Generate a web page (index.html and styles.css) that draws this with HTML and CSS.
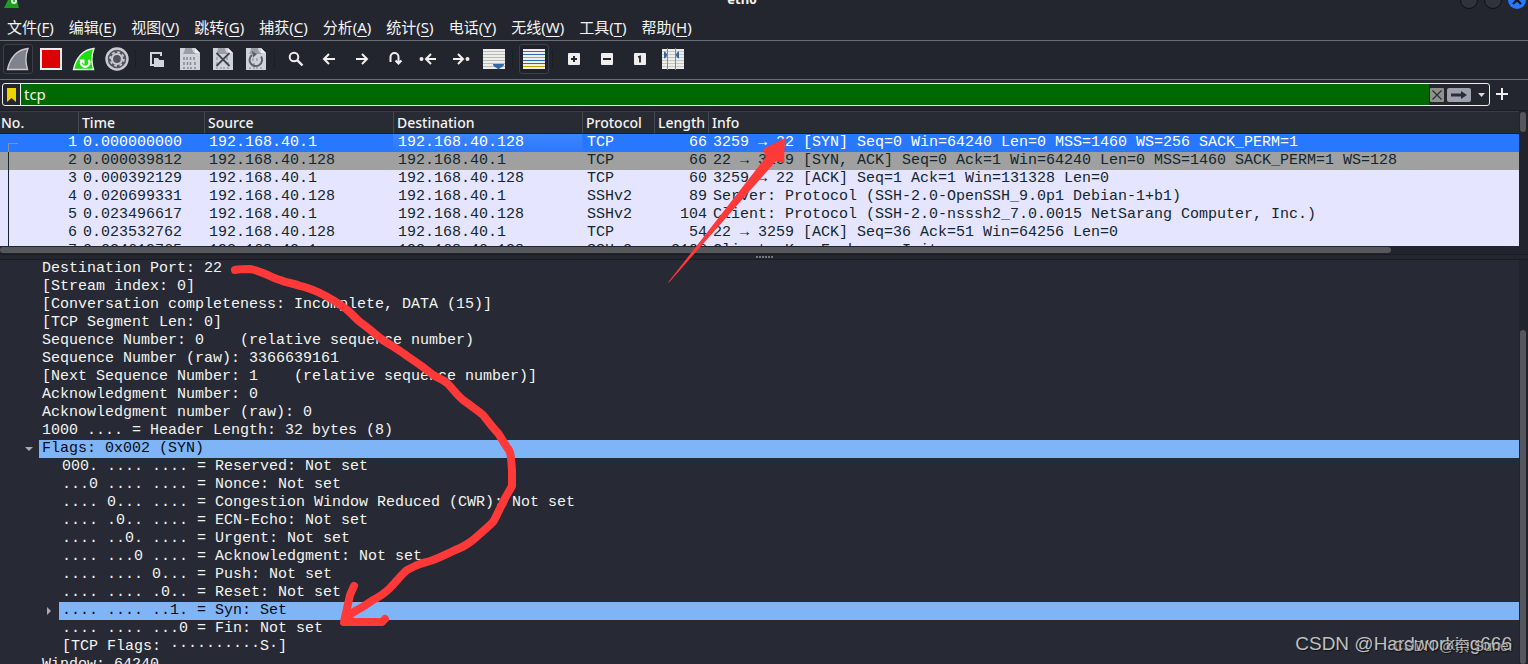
FILE: index.html
```html
<!DOCTYPE html>
<html lang="zh-CN">
<head>
<meta charset="utf-8">
<title>eth0</title>
<link rel="stylesheet" href="styles.css">
</head>
<body>
<div class="window">
  <header class="titlebar">
    <svg class="app-icon" width="16" height="10" viewBox="0 0 16 10"><path d="M0 8L4 0H13L15 8Z" fill="#1f9d1f"/><circle cx="10" cy="1" r="3" fill="#d9f2d9"/><circle cx="10" cy="1" r="1" fill="#1f9d1f"/></svg>
    <span class="title">eth0</span>
    <div class="window-buttons">
      <button class="win-btn" aria-label="最小化"></button>
      <button class="win-btn" aria-label="最大化"></button>
      <button class="win-btn win-close" aria-label="关闭"><svg width="18" height="18" viewBox="0 0 18 18"><path d="M5 5L13 13M13 5L5 13" stroke="#15171d" stroke-width="2.4"/></svg></button>
    </div>
  </header>

  <nav class="menubar">
    <button>文件(<u>F</u>)</button>
    <button>编辑(<u>E</u>)</button>
    <button>视图(<u>V</u>)</button>
    <button>跳转(<u>G</u>)</button>
    <button>捕获(<u>C</u>)</button>
    <button>分析(<u>A</u>)</button>
    <button>统计(<u>S</u>)</button>
    <button>电话(<u>Y</u>)</button>
    <button>无线(<u>W</u>)</button>
    <button>工具(<u>T</u>)</button>
    <button>帮助(<u>H</u>)</button>
  </nav>

  <div class="toolbar">
    <button class="tool framed" aria-label="开始捕获"><svg width="24" height="24" viewBox="0 0 24 24"><path d="M1.5 22.5C4 11 11 2.500 22 1.500C19.500 8 19.500 16 21.500 22.500Z" fill="#80838b" stroke="#c9cbd0" stroke-width="1.400"/></svg></button>
    <button class="tool" aria-label="停止捕获"><svg width="24" height="24" viewBox="0 0 24 24"><rect x="2" y="2" width="20" height="20" fill="#dc0000" stroke="#eeeeec" stroke-width="2"/></svg></button>
    <button class="tool" aria-label="重新开始"><svg width="24" height="24" viewBox="0 0 24 24"><path d="M1.500 22.500C4 11 11 2.500 22 1.500C19.500 8 19.500 16 21.500 22.500Z" fill="#1fdc10" stroke="#e4f5e2" stroke-width="1.400"/><path d="M9.500 13.500A4.200 4.200 0 1 0 16.500 13" fill="none" stroke="#fff" stroke-width="2.200"/><path d="M7 12.500H12.500V17.500Z" fill="#fff"/></svg></button>
    <button class="tool" aria-label="捕获选项"><svg width="24" height="24" viewBox="0 0 24 24"><circle cx="12" cy="12" r="10.500" fill="#53565e" stroke="#c9cbd1" stroke-width="2.400"/><circle cx="12" cy="12" r="6.800" fill="none" stroke="#c9cbd1" stroke-width="1.800" stroke-dasharray="2.700 2.640"/><circle cx="12" cy="12" r="5" fill="#50535b" stroke="#c9cbd1" stroke-width="2.200"/></svg></button>
    <span class="sep"></span>
    <button class="tool" aria-label="打开"><svg width="24" height="24" viewBox="0 0 24 24"><path d="M9 18H6V6H16V9" fill="none" stroke="#d3d5dc" stroke-width="2"/><path d="M9 11H13L14.500 13H19V20H9Z" fill="#d3d5dc"/></svg></button>
    <button class="tool" aria-label="保存"><svg width="24" height="24" viewBox="0 0 24 24"><path d="M2 1H17L22 6V23H2Z" fill="#cfd2d8"/><path d="M7 1C7 3 6 5 5 7H19C15 6 14 3 14 1Z" fill="#9a9da5"/><path d="M17 1V6H22Z" fill="#eceef1"/><path d="M6 10V13M9 10V13M12.500 10V13M16 10V13M6 15V18M9.500 15V18M12.500 15V18M17 15V18M6 20V22M10 20V22M13 20V22M17 20V22" stroke="#858891" stroke-width="1.500"/></svg></button>
    <button class="tool" aria-label="关闭文件"><svg width="24" height="24" viewBox="0 0 24 24"><path d="M2 1H17L22 6V23H2Z" fill="#cfd2d8"/><path d="M7 1C7 3 6 5 5 7H19C15 6 14 3 14 1Z" fill="#9a9da5"/><path d="M17 1V6H22Z" fill="#eceef1"/><path d="M6 10V13M16 10V13M6 15V18M17 15V18M6 20V22M10 20V22M13 20V22M17 20V22" stroke="#9a9da5" stroke-width="1.500"/><path d="M5.500 6L18.500 19M18.500 6L5.500 19" stroke="#42454e" stroke-width="1.800"/></svg></button>
    <button class="tool" aria-label="重新加载"><svg width="24" height="24" viewBox="0 0 24 24"><path d="M2 1H17L22 6V23H2Z" fill="#cfd2d8"/><path d="M7 1C7 3 6 5 5 7H19C15 6 14 3 14 1Z" fill="#9a9da5"/><path d="M17 1V6H22Z" fill="#eceef1"/><path d="M9 11V14M13 11V14M10 16V18M6 20V22M10 20V22M13 20V22M17 20V22" stroke="#9a9da5" stroke-width="1.500"/><path d="M8 8A6.200 6.200 0 1 0 17 9.500" fill="none" stroke="#5d606a" stroke-width="2"/><path d="M8 4L13 7L9 10.500Z" fill="#5d606a"/></svg></button>
    <span class="sep"></span>
    <button class="tool" aria-label="查找"><svg width="24" height="24" viewBox="0 0 24 24"><circle cx="10" cy="10" r="4.300" fill="none" stroke="#eee" stroke-width="2"/><path d="M13.200 13.200L18.500 18.500" stroke="#eee" stroke-width="2.400"/></svg></button>
    <button class="tool" aria-label="上一分组"><svg class="arrow" width="24" height="24" viewBox="0 0 24 24"><path d="M18 12H7.500M12 7L7 12L12 17"/></svg></button>
    <button class="tool" aria-label="下一分组"><svg class="arrow" width="24" height="24" viewBox="0 0 24 24"><path d="M6 12H16.500M12 7L17 12L12 17"/></svg></button>
    <button class="tool" aria-label="转到分组"><svg class="arrow" width="24" height="24" viewBox="0 0 24 24"><path d="M7.500 15V10A4 4 0 0 1 15.500 10V16M12.500 13.500L15.500 16.500L18.500 13.500"/></svg></button>
    <button class="tool" aria-label="首个分组"><svg class="arrow" width="24" height="24" viewBox="0 0 24 24"><path d="M20 12H10.500M15 7L10 12L15 17"/><circle cx="5.500" cy="12" r="1"/></svg></button>
    <button class="tool" aria-label="最新分组"><svg class="arrow" width="24" height="24" viewBox="0 0 24 24"><path d="M4 12H13.500M9 7L14 12L9 17"/><circle cx="18.500" cy="12" r="1"/></svg></button>
    <button class="tool" aria-label="自动滚动"><svg width="24" height="24" viewBox="0 0 24 24"><path d="M1 2H23V22H1Z" fill="#eeeeec"/><path d="M1 4.500H23M1 7.500H23M1 10.500H23M1 13.500H23M1 16.500H23M1 19.500H23" stroke="#b8bab6"/><path d="M11 17H22C22 20 18.500 20 16.500 22.500C14.500 20 11 20 11 17Z" fill="#3465a4"/></svg></button>
    <span class="sep"></span>
    <button class="tool framed" aria-label="着色"><svg width="24" height="24" viewBox="0 0 24 24"><path d="M1 2H23V22H1Z" fill="#eeeeec"/><path d="M1 4.500H23" stroke="#ef2929"/><path d="M1 7.500H23M1 13.500H23" stroke="#3465a4"/><path d="M1 10.500H23" stroke="#73d216"/><path d="M1 16.500H23" stroke="#75507b"/><path d="M1 19.500H23" stroke="#c4a000"/></svg></button>
    <span class="sep"></span>
    <button class="tool" aria-label="放大"><svg width="24" height="24" viewBox="0 0 24 24"><rect x="6" y="6" width="12" height="12" rx="1" fill="#eeeeec"/><path d="M12 9V15M9 12H15" stroke="#23262f" stroke-width="2"/></svg></button>
    <button class="tool" aria-label="缩小"><svg width="24" height="24" viewBox="0 0 24 24"><rect x="6" y="6" width="12" height="12" rx="1" fill="#eeeeec"/><path d="M8 12H16" stroke="#23262f" stroke-width="2"/></svg></button>
    <button class="tool" aria-label="正常大小"><svg width="24" height="24" viewBox="0 0 24 24"><rect x="6" y="6" width="12" height="12" rx="1" fill="#eeeeec"/><path d="M10 10L12 9.500V15.500" fill="none" stroke="#23262f" stroke-width="1.800"/></svg></button>
    <button class="tool" aria-label="调整列宽"><svg width="24" height="24" viewBox="0 0 24 24"><path d="M1 2H23V22H1Z" fill="#eeeeec"/><path d="M1 4.500H23M1 7.500H23M1 10.500H23M1 13.500H23M1 16.500H23M1 19.500H23" stroke="#c4c6c2"/><path d="M6.500 1V23M14.500 1V23" stroke="#888a85"/><path d="M3 4.500C5 5 6 7 6 8C6 9 5 11 3 11.500ZM18 4.500C16 5 15 7 15 8C15 9 16 11 18 11.500Z" fill="#3465a4"/></svg></button>
  </div>

  <div class="filterbar">
    <div class="filter">
      <button class="bookmark" aria-label="书签"><svg width="9" height="14" viewBox="0 0 9 14"><path d="M0 0H9V14L4.500 10L0 14Z" fill="#edd400"/></svg></button>
      <input class="filter-input" type="text" value="tcp" aria-label="显示过滤器">
      <button class="clear" aria-label="清除"><svg width="14" height="14" viewBox="0 0 14 14"><rect width="14" height="14" rx="1" fill="#8f918b"/><path d="M2.500 2.500L11.500 11.500M11.500 2.500L2.500 11.500" stroke="#2b2e37" stroke-width="1.200"/></svg></button>
      <button class="apply" aria-label="应用"><svg width="24" height="14" viewBox="0 0 24 14"><rect width="24" height="14" rx="2" fill="#9ea1ab"/><path d="M4 5.500H14V3L20 7L14 11V8.500H4Z" fill="#2b2e37"/></svg></button>
      <button class="drop" aria-label="历史"><svg width="7" height="4" viewBox="0 0 7 4"><path d="M0 0H7L3.500 4Z" fill="#d8d9d6"/></svg></button>
    </div>
    <button class="add" aria-label="添加"><svg width="12" height="12" viewBox="0 0 12 12"><path d="M6 0V12M0 6H12" stroke="#eee" stroke-width="2"/></svg></button>
  </div>

  <section class="packets">
    <div class="packet-view">
      <table class="packet-table">
        <colgroup><col class="c-no"><col class="c-time"><col class="c-addr"><col class="c-addr"><col class="c-proto"><col class="c-len"><col></colgroup>
        <thead><tr><th>No.</th><th>Time</th><th>Source</th><th>Destination</th><th>Protocol</th><th>Length</th><th>Info</th></tr></thead>
        <tbody>
          <tr class="selected"><td class="num first">1</td><td>0.000000000</td><td>192.168.40.1</td><td class="hover">192.168.40.128</td><td>TCP</td><td class="num">66</td><td>3259 → 22 [SYN] Seq=0 Win=64240 Len=0 MSS=1460 WS=256 SACK_PERM=1</td></tr>
          <tr class="gray"><td class="num link">2</td><td>0.000039812</td><td>192.168.40.128</td><td>192.168.40.1</td><td>TCP</td><td class="num">66</td><td>22 → 3259 [SYN, ACK] Seq=0 Ack=1 Win=64240 Len=0 MSS=1460 SACK_PERM=1 WS=128</td></tr>
          <tr><td class="num link">3</td><td>0.000392129</td><td>192.168.40.1</td><td>192.168.40.128</td><td>TCP</td><td class="num">60</td><td>3259 → 22 [ACK] Seq=1 Ack=1 Win=131328 Len=0</td></tr>
          <tr><td class="num link">4</td><td>0.020699331</td><td>192.168.40.128</td><td>192.168.40.1</td><td>SSHv2</td><td class="num">89</td><td>Server: Protocol (SSH-2.0-OpenSSH_9.0p1 Debian-1+b1)</td></tr>
          <tr><td class="num link">5</td><td>0.023496617</td><td>192.168.40.1</td><td>192.168.40.128</td><td>SSHv2</td><td class="num">104</td><td>Client: Protocol (SSH-2.0-nsssh2_7.0.0015 NetSarang Computer, Inc.)</td></tr>
          <tr><td class="num link">6</td><td>0.023532762</td><td>192.168.40.128</td><td>192.168.40.1</td><td>TCP</td><td class="num">54</td><td>22 → 3259 [ACK] Seq=36 Ack=51 Win=64256 Len=0</td></tr>
          <tr><td class="num link">7</td><td>0.024619765</td><td>192.168.40.1</td><td>192.168.40.128</td><td>SSHv2</td><td class="num">2106</td><td>Client: Key Exchange Init</td></tr>
        </tbody>
      </table>
    </div>
    <div class="vscroll"><div class="thumb thumb-top"></div></div>
  </section>
  <div class="hscroll"><div class="thumb-h"></div></div>
  <div class="splitter"><i></i><i></i><i></i><i></i><i></i><i></i></div>

  <section class="details">
    <ul class="tree">
      <li><span>Destination Port: 22</span></li>
      <li><span>[Stream index: 0]</span></li>
      <li><span>[Conversation completeness: Incomplete, DATA (15)]</span></li>
      <li><span>[TCP Segment Len: 0]</span></li>
      <li><span>Sequence Number: 0    (relative sequence number)</span></li>
      <li><span>Sequence Number (raw): 3366639161</span></li>
      <li><span>[Next Sequence Number: 1    (relative sequence number)]</span></li>
      <li><span>Acknowledgment Number: 0</span></li>
      <li><span>Acknowledgment number (raw): 0</span></li>
      <li><span>1000 .... = Header Length: 32 bytes (8)</span></li>
      <li class="marked"><button class="expander" aria-label="折叠"><svg width="8" height="4" viewBox="0 0 8 4"><path d="M0 0H8L4 4Z" fill="#a9abaf"/></svg></button><span>Flags: 0x002 (SYN)</span></li>
      <li class="child"><span>000. .... .... = Reserved: Not set</span></li>
      <li class="child"><span>...0 .... .... = Nonce: Not set</span></li>
      <li class="child"><span>.... 0... .... = Congestion Window Reduced (CWR): Not set</span></li>
      <li class="child"><span>.... .0.. .... = ECN-Echo: Not set</span></li>
      <li class="child"><span>.... ..0. .... = Urgent: Not set</span></li>
      <li class="child"><span>.... ...0 .... = Acknowledgment: Not set</span></li>
      <li class="child"><span>.... .... 0... = Push: Not set</span></li>
      <li class="child"><span>.... .... .0.. = Reset: Not set</span></li>
      <li class="child marked"><button class="expander" aria-label="展开"><svg width="4" height="8" viewBox="0 0 4 8"><path d="M0 0V8L4 4Z" fill="#a9abaf"/></svg></button><span>.... .... ..1. = Syn: Set</span></li>
      <li class="child"><span>.... .... ...0 = Fin: Not set</span></li>
      <li class="child"><span>[TCP Flags: ··········S·]</span></li>
      <li><span>Window: 64240</span></li>
    </ul>
    <div class="vscroll"><div class="thumb thumb-bottom"></div></div>
  </section>

  <svg class="annotations" width="1528" height="664" viewBox="0 0 1528 664">
    <path d="M668 282.500L766 157L763 149L785 138L784 163L776 161L669 282.500Z" fill="#ff3838"/>
    <path d="M235 270C240 269 246 269 250 269C260 270 270 277 280 280C287 283 293 283 300 286C307 287 313 290 320 293C328 297 336 301 343 307C350 311 354 317 360 322C367 327 373 332 380 338C388 344 398 349 407 356C416 362 425 368 433 375C438 378 443 379 448 384C453 389 457 395 463 400C470 405 477 410 483 415C488 421 493 428 498 433C502 439 505 445 509 450C512 456 511 463 512 470V486C509 492 505 497 503 503C499 509 497 516 493 522C487 528 480 534 473 540C469 543 465 546 460 548C448 553 438 559 427 562C420 563 413 567 407 570C401 575 396 582 390 588C385 593 379 597 373 600C367 604 362 608 357 610C352 613 348 616 345 618" class="stroke"/>
    <path d="M354 586L350 595L344 622H382L385 619" class="stroke"/>
  </svg>
  <div class="mark mark-large">CSDN @Hardworking666</div>
  <div class="mark mark-small">CSDN @奈 Sunei</div>
</div>
</body>
</html>
```
FILE: styles.css
```css
* { box-sizing: border-box; }
body {
  margin: 0;
  background: #23262f;
  color: #f4f4f2;
  font: 15px/18px "Noto Sans", "Noto Sans CJK SC", sans-serif;
}
button { margin: 0; padding: 0; border: 0; background: none; color: inherit; font: inherit; }
svg { display: block; flex: none; }
.window { position: relative; height: 100vh; display: flex; flex-direction: column; overflow: hidden; }

.titlebar { height: 16px; flex: none; display: flex; justify-content: space-between; align-items: flex-start; padding: 0 2px 0 4px; }
.title { position: absolute; top: -10px; left: 0; right: 44px; text-align: center; font-size: 13px; font-weight: 700; }
.window-buttons { display: flex; gap: 6px; margin-top: -9px; }
.win-btn { width: 18px; height: 18px; border-radius: 50%; background: #30333d; border: 1px solid #0e0f13; }
.win-close { background: #2777ff; border: 0; }

.menubar { height: 25px; flex: none; display: flex; align-items: flex-start; gap: 15px; padding: 2px 7px 0; border-bottom: 1px solid #6b6d73; white-space: nowrap; }
.menubar u { text-underline-offset: 3px; }

.toolbar { height: 39px; flex: none; display: flex; align-items: center; gap: 3px; padding: 0 3px 2px; border-bottom: 1px solid #6b6d73; background: #22252d; }
.tool { width: 30px; height: 30px; border-radius: 3px; display: flex; align-items: center; justify-content: center; }
.framed { border: 1px solid #3d4048; background: #1f2229; }
.sep { width: 4px; height: 18px; border-left: 1px solid #1b1e24; }
.arrow { fill: none; stroke: #f0f0ee; stroke-width: 2; }

.filterbar { height: 31px; flex: none; display: flex; align-items: flex-start; padding: 3px 20px 0 2px; gap: 6px; border-bottom: 1px solid #1a1d23; }
.filter { flex: 1; height: 23px; display: flex; align-items: center; border: 1px solid #eeeeec; border-radius: 3px; background: #23262f; }
.bookmark { width: 18px; height: 21px; border-right: 1px solid #eeeeec; display: flex; align-items: center; justify-content: center; }
.filter-input { flex: 1; min-width: 0; height: 21px; margin-right: 1px; padding: 0 3px 2px; border: 0; outline: 0; background: #006800; color: #f4f4f2; font: inherit; }
.apply { margin-left: 3px; }
.drop { margin: 0 4px 0 7px; }
.add { height: 22px; display: flex; align-items: center; width: 12px; }

.packets { height: 135px; flex: none; display: flex; }
.packet-view { flex: 1; min-width: 0; overflow: hidden; background: #e6e5ff; }
.packet-table { width: 100%; table-layout: fixed; border-collapse: separate; border-spacing: 0; white-space: nowrap; }
.c-no { width: 78px; }
.c-time { width: 126px; }
.c-addr { width: 189px; }
.c-proto { width: 72px; }
.c-len { width: 54px; }
th { height: 23px; padding: 0 0 0 3px; text-align: left; font: 500 14px/20px "Noto Sans", sans-serif; background: #282b34; border-left: 1px solid #444750; border-top: 1px solid #3a3d45; border-bottom: 1px solid #1a1d23; }
th:first-child { padding-left: 1px; border-left: 0; }
td { height: 18px; padding: 0 0 0 5px; font: 15px/18px "Liberation Mono", monospace; color: #12272e; }
.num { padding: 0 1px 0 0; text-align: right; }
td.num:first-child { position: relative; }
.gray td { background: #a0a0a0; }
.selected td { background: #2777ff; color: #fff; }
.selected .hover { background: linear-gradient(#3e86ff, #2c79ff); }
.first::before { content: ""; position: absolute; left: 8px; top: 9px; width: 9px; height: 9px; border: solid #8d8f99; border-width: 1px 0 0 1px; }
.link::before { content: ""; position: absolute; left: 8px; top: 0; height: 18px; border-left: 1px solid #12272e; }

.vscroll { width: 9px; flex: none; background: #21242c; padding: 1px 2px 0 1px; }
.thumb { background: #55575a; border-radius: 3px; }
.thumb-top { height: 20px; }
.thumb-bottom { height: 100%; }
.hscroll { height: 8px; flex: none; padding: 1px 9px 1px 0; background: #21242c; }
.thumb-h { width: 91.6%; height: 6px; border-radius: 3px; background: #55575a; }
.splitter { height: 6px; flex: none; display: flex; justify-content: center; align-items: center; gap: 1px; border-top: 1px solid #191c22; border-bottom: 1px solid #191c22; }
.splitter i { width: 2px; height: 2px; background: #74767c; }

.details { flex: 1; min-height: 0; display: flex; background: #272a34; }
.details .vscroll { padding-top: 70px; }
.tree { flex: 1; min-width: 0; margin: 0; padding: 0; list-style: none; overflow: hidden; font: 15px/18px "Liberation Mono", monospace; }
.tree li { display: flex; padding-left: 39px; }
.tree li.child { padding-left: 59px; }
.tree li span { flex: 1; padding-left: 3px; white-space: pre; }
.tree .marked span { background: #7fb5f7; color: #080b10; }
.tree .expander { width: 20px; height: 18px; margin-left: -20px; display: flex; justify-content: center; align-items: center; }

.annotations { position: absolute; left: 0; top: 0; pointer-events: none; }
.stroke { fill: none; stroke: #ff3838; stroke-width: 8; stroke-linecap: round; stroke-linejoin: round; }
.mark { position: absolute; right: 16px; color: #bfc0c3; text-shadow: 1px 1px 1px #111; white-space: nowrap; }
.mark-large { bottom: 9px; font: 19px/22px "Liberation Sans", sans-serif; }
.mark-small { bottom: 9px; font: 15px/18px "Liberation Sans", "Noto Sans CJK SC", sans-serif; opacity: 0.8; }
```
